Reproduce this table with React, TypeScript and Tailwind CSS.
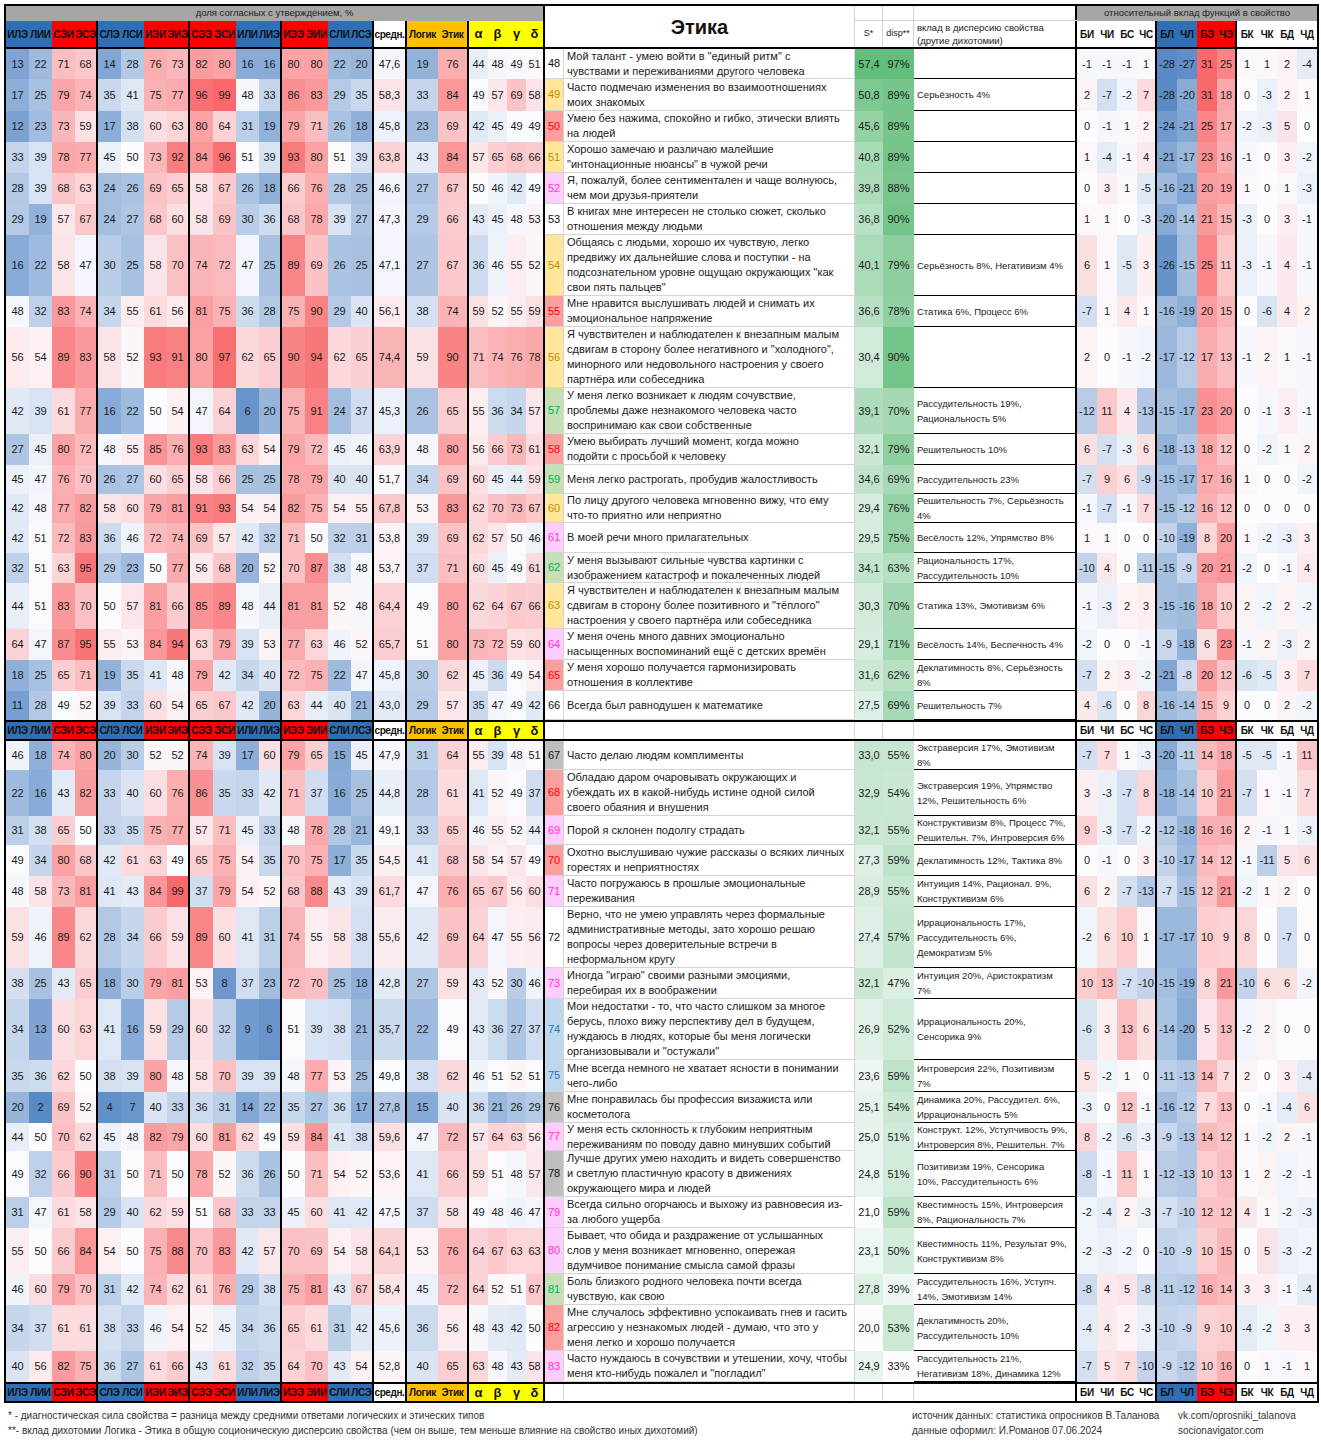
import React from "react";

type Cat = "w" | "y" | "r" | "p" | "g" | "gr" | "b";

interface Item {
  n: number;
  h: string;
  t: number[];
  avg: string;
  le: [number, number];
  q: number[];
  cat: Cat;
  text: string[];
  s: string;
  d: number;
  v: string[];
  f: number[];
}

const TYPES = ["ИЛЭ", "ЛИИ", "СЭИ", "ЭСЭ", "СЛЭ", "ЛСИ", "ИЭИ", "ЭИЭ", "СЭЭ", "ЭСИ", "ИЛИ", "ЛИЭ", "ИЭЭ", "ЭИИ", "СЛИ", "ЛСЭ"];
const TYPE_RED = [false, false, true, true, false, false, true, true, true, true, false, false, true, true, false, false];
const GREEK = ["α", "β", "γ", "δ"];
const FUNCS = ["БИ", "ЧИ", "БС", "ЧС", "БЛ", "ЧЛ", "БЭ", "ЧЭ", "БК", "ЧК", "БД", "ЧД"];

const CAT: Record<Cat, string> = {
  w: "bg-white text-[#111]",
  y: "bg-[#ffe699] text-[#bf8f00]",
  r: "bg-[#fb9e9e] text-[#ff0000]",
  p: "bg-[#ffccff] text-[#ff33cc]",
  g: "bg-[#c6e0b4] text-[#00b050]",
  gr: "bg-[#bfbfbf] text-[#111]",
  b: "bg-[#bdd7ee] text-[#2e75b6]"
};

const ROWS: Item[] = [
  { n: 48, h: "h-[30px]", t: [13, 22, 71, 68, 14, 28, 76, 73, 82, 80, 16, 16, 80, 80, 22, 20], avg: "47,6", le: [19, 76], q: [44, 48, 49, 51], cat: "w",
    text: ["Мой талант - умею войти в \"единый ритм\" с", "чувствами и переживаниями другого человека"], s: "57,4", d: 97, v: [],
    f: [-1, -1, -1, 1, -28, -27, 31, 25, 1, 1, 2, -4] },
  { n: 49, h: "h-[32px]", t: [17, 25, 79, 74, 35, 41, 75, 77, 96, 99, 48, 33, 86, 83, 29, 35], avg: "58,3", le: [33, 84], q: [49, 57, 69, 58], cat: "y",
    text: ["Часто подмечаю изменения во взаимоотношениях", "моих знакомых"], s: "50,8", d: 89, v: ["Серьёзность 4%"],
    f: [2, -7, -2, 7, -28, -20, 31, 18, 0, -3, 2, 1] },
  { n: 50, h: "h-[31px]", t: [12, 23, 73, 59, 17, 38, 60, 63, 80, 64, 31, 19, 79, 71, 26, 18], avg: "45,8", le: [23, 69], q: [42, 45, 49, 49], cat: "r",
    text: ["Умею без нажима, спокойно и гибко, этически влиять", "на людей"], s: "45,6", d: 89, v: [],
    f: [0, -1, 1, 2, -24, -21, 25, 17, -2, -3, 5, 0] },
  { n: 51, h: "h-[31px]", t: [33, 39, 78, 77, 45, 50, 73, 92, 84, 96, 51, 39, 93, 80, 51, 39], avg: "63,8", le: [43, 84], q: [57, 65, 68, 66], cat: "y",
    text: ["Хорошо замечаю и различаю малейшие", "\"интонационные нюансы\" в чужой речи"], s: "40,8", d: 89, v: [],
    f: [1, -4, -1, 4, -21, -17, 23, 16, -1, 0, 3, -2] },
  { n: 52, h: "h-[31px]", t: [28, 39, 68, 63, 24, 26, 69, 65, 58, 67, 26, 18, 66, 76, 28, 25], avg: "46,6", le: [27, 67], q: [50, 46, 42, 49], cat: "p",
    text: ["Я, пожалуй, более сентиментален и чаще волнуюсь,", "чем мои друзья-приятели"], s: "39,8", d: 88, v: [],
    f: [0, 3, 1, -5, -16, -21, 20, 19, 1, 0, 1, -3] },
  { n: 53, h: "h-[31px]", t: [29, 19, 57, 67, 24, 27, 68, 60, 58, 69, 30, 36, 68, 78, 39, 27], avg: "47,3", le: [29, 66], q: [43, 45, 48, 53], cat: "w",
    text: ["В книгах мне интересен не столько сюжет, сколько", "отношения между людьми"], s: "36,8", d: 90, v: [],
    f: [1, 1, 0, -3, -20, -14, 21, 15, -3, 0, 3, -1] },
  { n: 54, h: "h-[61px]", t: [16, 22, 58, 47, 30, 25, 58, 70, 74, 72, 47, 25, 89, 69, 26, 25], avg: "47,1", le: [27, 67], q: [36, 46, 55, 52], cat: "y",
    text: ["Общаясь с людьми, хорошо их чувствую, легко", "предвижу их дальнейшие слова и поступки - на", "подсознательном уровне ощущаю окружающих \"как", "свои пять пальцев\""], s: "40,1", d: 79, v: ["Серьёзность 8%, Негативизм 4%"],
    f: [6, 1, -5, 3, -26, -15, 25, 11, -3, -1, 4, -1] },
  { n: 55, h: "h-[31px]", t: [48, 32, 83, 74, 34, 55, 61, 56, 81, 75, 36, 28, 75, 90, 29, 40], avg: "56,1", le: [38, 74], q: [59, 52, 55, 59], cat: "r",
    text: ["Мне нравится выслушивать людей и снимать их", "эмоциональное напряжение"], s: "36,6", d: 78, v: ["Статика 6%, Процесс 6%"],
    f: [-7, 1, 4, 1, -16, -19, 20, 15, 0, -6, 4, 2] },
  { n: 56, h: "h-[61px]", t: [56, 54, 89, 83, 58, 52, 93, 91, 80, 97, 62, 65, 90, 94, 62, 65], avg: "74,4", le: [59, 90], q: [71, 74, 76, 78], cat: "y",
    text: ["Я чувствителен и наблюдателен к внезапным малым", "сдвигам в сторону более негативного и \"холодного\",", "минорного или недовольного настроения у своего", "партнёра или собеседника"], s: "30,4", d: 90, v: [],
    f: [2, 0, -1, -2, -17, -12, 17, 13, -1, 2, 1, -1] },
  { n: 57, h: "h-[46px]", t: [42, 39, 61, 77, 16, 22, 50, 54, 47, 64, 6, 20, 75, 91, 24, 37], avg: "45,3", le: [26, 65], q: [55, 36, 34, 57], cat: "g",
    text: ["У меня легко возникает к людям сочувствие,", "проблемы даже незнакомого человека часто", "воспринимаю как свои собственные"], s: "39,1", d: 70, v: ["Рассудительность 19%,", "Рациональность 5%"],
    f: [-12, 11, 4, -13, -15, -17, 23, 20, 0, -1, 3, -1] },
  { n: 58, h: "h-[31px]", t: [27, 45, 80, 72, 48, 55, 85, 76, 93, 83, 63, 54, 79, 72, 45, 46], avg: "63,9", le: [48, 80], q: [56, 66, 73, 61], cat: "r",
    text: ["Умею выбирать лучший момент, когда можно", "подойти с просьбой к человеку"], s: "32,1", d: 79, v: ["Решительность 10%"],
    f: [6, -7, -3, 6, -18, -13, 18, 12, 0, -2, 1, 2] },
  { n: 59, h: "h-[29px]", t: [45, 47, 76, 70, 26, 27, 60, 65, 58, 66, 25, 25, 78, 79, 40, 40], avg: "51,7", le: [34, 69], q: [60, 45, 44, 59], cat: "g",
    text: ["Меня легко растрогать, пробудив жалостливость"], s: "34,6", d: 69, v: ["Рассудительность 23%"],
    f: [-7, 9, 6, -9, -15, -17, 17, 16, 1, 0, 0, -2] },
  { n: 60, h: "h-[29px]", t: [42, 48, 77, 82, 58, 60, 79, 81, 91, 93, 54, 54, 82, 75, 54, 55], avg: "67,8", le: [53, 83], q: [62, 70, 73, 67], cat: "y",
    text: ["По лицу другого человека мгновенно вижу, что ему", "что-то приятно или неприятно"], s: "29,4", d: 76, v: ["Решительность 7%, Серьёзность", "4%"],
    f: [-1, -7, -1, 7, -15, -12, 16, 12, 0, 0, 0, 0] },
  { n: 61, h: "h-[30px]", t: [42, 51, 72, 83, 36, 46, 72, 74, 69, 57, 42, 32, 71, 50, 32, 31], avg: "53,8", le: [39, 69], q: [62, 57, 50, 46], cat: "p",
    text: ["В моей речи много прилагательных"], s: "29,5", d: 75, v: ["Весёлость 12%, Упрямство 8%"],
    f: [1, 1, 0, 0, -10, -19, 8, 20, 1, -2, -3, 3] },
  { n: 62, h: "h-[30px]", t: [32, 51, 63, 95, 29, 23, 50, 77, 56, 68, 20, 52, 70, 87, 38, 48], avg: "53,7", le: [37, 71], q: [60, 45, 49, 61], cat: "g",
    text: ["У меня вызывают сильные чувства картинки с", "изображением катастроф и покалеченных людей"], s: "34,1", d: 63, v: ["Рациональность 17%,", "Рассудительность 10%"],
    f: [-10, 4, 0, -11, -15, -9, 20, 21, -2, 0, -1, 4] },
  { n: 63, h: "h-[46px]", t: [44, 51, 83, 70, 50, 57, 81, 66, 85, 89, 48, 44, 81, 81, 52, 48], avg: "64,4", le: [49, 80], q: [62, 64, 67, 66], cat: "y",
    text: ["Я чувствителен и наблюдателен к внезапным малым", "сдвигам в сторону более позитивного и \"тёплого\"", "настроения у своего партнёра или собеседника"], s: "30,3", d: 70, v: ["Статика 13%, Эмотивизм 6%"],
    f: [-1, -3, 2, 3, -15, -16, 18, 10, 2, -2, 2, -2] },
  { n: 64, h: "h-[31px]", t: [64, 47, 87, 95, 55, 53, 84, 94, 63, 79, 39, 53, 77, 63, 46, 52], avg: "65,7", le: [51, 80], q: [73, 72, 59, 60], cat: "p",
    text: ["У меня очень много давних эмоционально", "насыщенных воспоминаний ещё с детских времён"], s: "29,1", d: 71, v: ["Весёлость 14%, Беспечность 4%"],
    f: [-2, 0, 0, -1, -9, -18, 6, 23, -1, 2, -3, 2] },
  { n: 65, h: "h-[31px]", t: [18, 25, 65, 71, 19, 35, 41, 48, 79, 42, 34, 40, 72, 75, 22, 47], avg: "45,8", le: [30, 62], q: [45, 36, 49, 54], cat: "r",
    text: ["У меня хорошо получается гармонизировать", "отношения в коллективе"], s: "31,6", d: 62, v: ["Деклатимность 8%, Серьёзность", "8%"],
    f: [-7, 2, 3, -2, -21, -8, 20, 12, -6, -5, 3, 7] },
  { n: 66, h: "h-[29px]", t: [11, 28, 49, 52, 39, 33, 60, 54, 65, 67, 42, 20, 63, 44, 40, 21], avg: "43,0", le: [29, 57], q: [35, 47, 49, 42], cat: "w",
    text: ["Всегда был равнодушен к математике"], s: "27,5", d: 69, v: ["Решительность 7%"],
    f: [4, -6, 0, 8, -16, -14, 15, 9, 0, 0, 2, -2] }
];

const ROWS2: Item[] = [
  { n: 67, h: "h-[29px]", t: [46, 18, 74, 80, 20, 30, 52, 52, 74, 39, 17, 60, 79, 65, 15, 45], avg: "47,9", le: [31, 64], q: [55, 39, 48, 51], cat: "gr",
    text: ["Часто делаю людям комплименты"], s: "33,0", d: 55, v: ["Экстраверсия 17%, Эмотивизм", "8%"],
    f: [-7, 7, 1, -3, -20, -11, 14, 18, -5, -5, -1, 11] },
  { n: 68, h: "h-[46px]", t: [22, 16, 43, 82, 33, 40, 60, 76, 86, 35, 33, 42, 71, 37, 16, 25], avg: "44,8", le: [28, 61], q: [41, 52, 49, 37], cat: "r",
    text: ["Обладаю даром очаровывать окружающих и", "убеждать их в какой-нибудь истине одной силой", "своего обаяния и внушения"], s: "32,9", d: 54, v: ["Экстраверсия 19%, Упрямство", "12%,  Решительность 6%"],
    f: [3, -3, -7, 8, -18, -14, 10, 21, -7, 1, -1, 7] },
  { n: 69, h: "h-[29px]", t: [31, 38, 65, 50, 33, 35, 75, 77, 57, 71, 45, 33, 48, 78, 28, 21], avg: "49,1", le: [33, 65], q: [46, 55, 52, 44], cat: "p",
    text: ["Порой я склонен подолгу страдать"], s: "32,1", d: 55, v: ["Конструктивизм 8%, Процесс 7%,", "Решительн. 7%, Интроверсия 6%"],
    f: [9, -3, -7, -2, -12, -18, 16, 16, 2, -1, 1, -3] },
  { n: 70, h: "h-[31px]", t: [49, 34, 80, 68, 42, 61, 63, 49, 65, 75, 54, 35, 70, 75, 17, 35], avg: "54,5", le: [41, 68], q: [58, 54, 57, 49], cat: "r",
    text: ["Охотно выслушиваю чужие рассказы о всяких личных", "горестях и неприятностях"], s: "27,3", d: 59, v: ["Деклатимность 12%, Тактика 8%"],
    f: [0, -1, 0, 3, -10, -17, 14, 12, -1, -11, 5, 6] },
  { n: 71, h: "h-[31px]", t: [48, 58, 73, 81, 41, 43, 84, 99, 37, 79, 54, 52, 68, 88, 43, 39], avg: "61,7", le: [47, 76], q: [65, 67, 56, 60], cat: "p",
    text: ["Часто погружаюсь в прошлые эмоциональные", "переживания"], s: "28,9", d: 55, v: ["Интуиция 14%,  Рационал. 9%,", "Конструктивизм 6%"],
    f: [6, 2, -7, -13, -7, -15, 12, 21, -2, 1, 2, 0] },
  { n: 72, h: "h-[61px]", t: [59, 46, 89, 62, 28, 34, 66, 59, 89, 60, 41, 31, 74, 55, 58, 38], avg: "55,6", le: [42, 69], q: [64, 47, 55, 56], cat: "w",
    text: ["Верно, что не умею управлять через формальные", "административные методы, зато хорошо решаю", "вопросы через доверительные встречи в", "неформальном кругу"], s: "27,4", d: 57, v: ["Иррациональность 17%,", "Рассудительность 6%,", "Демократизм 5%"],
    f: [-2, 6, 10, 1, -17, -17, 10, 9, 8, 0, -7, 0] },
  { n: 73, h: "h-[31px]", t: [38, 25, 43, 65, 18, 30, 79, 81, 53, 8, 37, 23, 72, 70, 25, 18], avg: "42,8", le: [27, 59], q: [43, 52, 30, 46], cat: "p",
    text: ["Иногда \"играю\" своими разными эмоциями,", "перебирая их в воображении"], s: "32,1", d: 47, v: ["Интуиция 20%, Аристократизм", "7%"],
    f: [10, 13, -7, -10, -15, -19, 8, 21, -10, 6, 6, -2] },
  { n: 74, h: "h-[61px]", t: [34, 13, 60, 63, 41, 16, 59, 29, 60, 32, 9, 6, 51, 39, 38, 21], avg: "35,7", le: [22, 49], q: [43, 36, 27, 37], cat: "b",
    text: ["Мои недостатки - то, что часто слишком за многое", "берусь, плохо вижу перспективу дел в будущем,", "нуждаюсь в людях, которые бы меня логически", "организовывали и \"остужали\""], s: "26,9", d: 52, v: ["Иррациональность 20%,", "Сенсорика 9%"],
    f: [-6, 3, 13, 6, -14, -20, 5, 13, -2, 2, 0, 0] },
  { n: 75, h: "h-[32px]", t: [35, 36, 62, 50, 38, 39, 80, 48, 58, 70, 39, 39, 48, 77, 53, 25], avg: "49,8", le: [38, 62], q: [46, 51, 52, 51], cat: "b",
    text: ["Мне всегда немного не хватает ясности в понимании", "чего-либо"], s: "23,6", d: 59, v: ["Интроверсия 22%, Позитивизм", "7%"],
    f: [5, -2, 1, 0, -11, -13, 14, 7, 2, 0, 3, -4] },
  { n: 76, h: "h-[31px]", t: [20, 2, 69, 52, 4, 7, 40, 33, 36, 31, 14, 22, 35, 27, 36, 17], avg: "27,8", le: [15, 40], q: [36, 21, 26, 29], cat: "gr",
    text: ["Мне понравилась бы профессия визажиста или", "косметолога"], s: "25,1", d: 54, v: ["Динамика 20%, Рассудител. 6%,", "Иррациональность 5%"],
    f: [-3, 0, 12, -1, -16, -12, 7, 13, 0, -1, -4, 6] },
  { n: 77, h: "h-[28px]", t: [44, 50, 70, 62, 45, 48, 82, 79, 60, 81, 62, 49, 59, 84, 41, 38], avg: "59,6", le: [47, 72], q: [57, 64, 63, 56], cat: "p",
    text: ["У меня есть склонность к глубоким неприятным", "переживаниям по поводу давно минувших событий"], s: "25,0", d: 51, v: ["Конструкт. 12%, Уступчивость 9%,", "Интроверсия 8%, Решительн. 7%"],
    f: [8, -2, -6, -3, -9, -13, 14, 12, 1, -2, 2, -1] },
  { n: 78, h: "h-[46px]", t: [49, 32, 66, 90, 31, 50, 71, 50, 78, 52, 36, 26, 50, 71, 54, 52], avg: "53,6", le: [41, 66], q: [59, 51, 48, 57], cat: "gr",
    text: ["Лучше других умею находить и видеть совершенство", "и светлую пластичную красоту в движениях", "окружающего мира и людей"], s: "24,8", d: 51, v: ["Позитивизм 19%, Сенсорика", "10%, Рассудительность 6%"],
    f: [-8, -1, 11, 1, -12, -13, 10, 13, 1, 2, -2, -1] },
  { n: 79, h: "h-[31px]", t: [31, 47, 61, 58, 29, 40, 62, 59, 51, 68, 33, 33, 45, 60, 41, 42], avg: "47,5", le: [37, 58], q: [49, 48, 46, 47], cat: "p",
    text: ["Всегда сильно огорчаюсь и выхожу из равновесия из-", "за любого ущерба"], s: "21,0", d: 59, v: ["Квестимность 15%, Интроверсия", "8%, Рациональность 7%"],
    f: [-2, -4, 2, -3, -7, -10, 12, 12, 4, 1, -2, -3] },
  { n: 80, h: "h-[46px]", t: [55, 50, 66, 84, 54, 50, 75, 88, 70, 83, 42, 57, 70, 69, 54, 58], avg: "64,1", le: [53, 76], q: [64, 67, 63, 63], cat: "p",
    text: ["Бывает, что обида и раздражение от услышанных", "слов у меня возникает мгновенно, опережая", "вдумчивое понимание смысла самой фразы"], s: "23,1", d: 50, v: ["Квестимность 11%, Результат 9%,", "Конструктивизм 8%"],
    f: [-2, -3, -2, 0, -10, -9, 10, 15, 0, 5, -3, -2] },
  { n: 81, h: "h-[31px]", t: [46, 60, 79, 70, 31, 42, 74, 62, 61, 76, 29, 38, 75, 81, 43, 67], avg: "58,4", le: [45, 72], q: [64, 52, 51, 67], cat: "g",
    text: ["Боль близкого родного человека почти всегда", "чувствую, как свою"], s: "27,8", d: 39, v: ["Рассудительность 16%, Уступч.", "14%, Эмотивизм 14%"],
    f: [-8, 4, 5, -8, -11, -12, 16, 14, 3, 3, -1, -4] },
  { n: 82, h: "h-[46px]", t: [34, 37, 61, 61, 38, 33, 46, 54, 52, 45, 34, 36, 65, 61, 31, 42], avg: "45,6", le: [36, 56], q: [48, 43, 42, 50], cat: "r",
    text: ["Мне случалось эффективно успокаивать гнев и гасить", "агрессию у незнакомых людей - думаю, что это у", "меня легко и хорошо получается"], s: "20,0", d: 53, v: ["Деклатимность 20%,", "Рассудительность 10%"],
    f: [-4, 4, 2, -3, -10, -9, 9, 10, -4, -2, 3, 3] },
  { n: 83, h: "h-[31px]", t: [40, 56, 82, 75, 36, 27, 61, 66, 43, 61, 32, 35, 64, 70, 43, 54], avg: "52,8", le: [40, 65], q: [63, 48, 43, 58], cat: "p",
    text: ["Часто нуждаюсь в сочувствии и утешении, хочу, чтобы", "меня кто-нибудь пожалел и \"погладил\""], s: "24,9", d: 33, v: ["Рассудительность 21%,", "Негативизм 18%, Динамика 12%"],
    f: [-7, 5, 7, -10, -9, -12, 10, 16, 0, 1, -1, 1] }
];

const WHITE = [252, 252, 255];
const RED = [248, 105, 107];
const BLUE = [90, 138, 198];
const GREEN = [99, 190, 123];

function mix(a: number[], b: number[], t: number): string {
  const k = Math.max(0, Math.min(1, t));
  const c = a.map((x, i) => Math.round(x + (b[i] - x) * k));
  return `rgb(${c[0]}, ${c[1]}, ${c[2]})`;
}

function heat(v: number, lo: number, mid: number, hi: number): string {
  if (v >= mid) return mix(WHITE, RED, (v - mid) / (hi - mid));
  return mix(WHITE, BLUE, (mid - v) / (mid - lo));
}

const pct = (v: number) => heat(v, 2, 50, 99);
const fn = (v: number) => heat(v, -28, 0, 31);
const green = (v: number, lo: number, hi: number) => mix(WHITE, GREEN, (v - lo) / (hi - lo));

const cell = "shrink-0 flex items-center justify-center";
const thick = "border-r-2 border-black";
const thin = "border-r border-[#d4d4d4]";

function LeftLabels() {
  return (
    <>
      {TYPES.map((t, i) => (
        <div
          key={t}
          className={`${cell} w-[23px] text-[10px] font-bold tracking-[-0.3px] text-[#111] ${
            TYPE_RED[i] ? "bg-[#ff0000]" : "bg-[#2f6fb6]"
          } ${i % 4 === 3 ? thick : ""}`}
        >
          {t}
        </div>
      ))}
      <div className={`${cell} w-[33px] bg-white text-[10px] font-bold tracking-[-0.4px] text-[#111] ${thick}`}>средн.</div>
      <div className={`${cell} w-[31px] bg-[#ffc000] text-[10px] font-bold tracking-[-0.3px] text-[#111]`}>Логик</div>
      <div className={`${cell} w-[31px] bg-[#ffc000] text-[10px] font-bold tracking-[-0.3px] text-[#111] ${thick}`}>Этик</div>
      {GREEK.map((g, i) => (
        <div key={g} className={`${cell} w-[19px] bg-[#ffff00] text-[13px] font-bold text-[#111] ${i === 3 ? thick : ""}`}>
          {g}
        </div>
      ))}
    </>
  );
}

function RightLabels() {
  return (
    <>
      {FUNCS.map((f, i) => (
        <div
          key={f}
          className={`${cell} w-[20px] text-[10px] font-bold tracking-[-0.3px] text-[#111] ${
            i === 4 || i === 5 ? "bg-[#2f6fb6]" : i === 6 || i === 7 ? "bg-[#ff0000]" : "bg-white"
          } ${i === 3 || i === 7 ? thick : ""}`}
        >
          {f}
        </div>
      ))}
    </>
  );
}

function SectionHeader({ top }: { top: boolean }) {
  return (
    <div className={`flex border-black ${top ? "h-[21px] border-y-2" : "h-[19px] border-t-2"}`}>
      <LeftLabels />
      <div className={`w-[19px] shrink-0 bg-white ${thin}`} />
      <div className={`w-[291px] shrink-0 bg-white ${thin}`} />
      <div className={`w-[28px] shrink-0 bg-white ${thin}`} />
      <div className={`w-[31px] shrink-0 bg-white ${thin}`} />
      <div className={`w-[163px] shrink-0 bg-white ${thick}`} />
      <RightLabels />
    </div>
  );
}

function TopHeader() {
  return (
    <div className="flex h-[43px] border-b-2 border-black">
      <div className="flex w-[539px] shrink-0 flex-col">
        <div className={`${cell} h-[15px] bg-[#a6a6a6] text-[9.5px] text-[#222] ${thick}`}>доля согласных с утверждением, %</div>
        <div className="flex flex-1">
          <LeftLabels />
        </div>
      </div>
      <div className={`${cell} w-[310px] text-[20px] font-bold text-[#111] ${thin}`}>Этика</div>
      <div className="flex w-[222px] shrink-0 flex-col">
        <div className="flex h-[15px] border-b border-[#d4d4d4]">
          <div className={`w-[28px] shrink-0 ${thin}`} />
          <div className={`w-[31px] shrink-0 ${thin}`} />
          <div className={`w-[163px] shrink-0 ${thick}`} />
        </div>
        <div className="flex flex-1">
          <div className={`${cell} w-[28px] text-[9px] text-[#222] ${thin}`}>S*</div>
          <div className={`${cell} w-[31px] text-[9px] text-[#222] ${thin}`}>disp**</div>
          <div className={`w-[163px] shrink-0 overflow-hidden pl-[3px] text-[9.5px] leading-[13px] text-[#222] ${thick}`}>
            вклад в дисперсию свойства
            <br />
            (другие дихотомии)
          </div>
        </div>
      </div>
      <div className="flex w-[240px] shrink-0 flex-col">
        <div className={`${cell} h-[15px] bg-[#a6a6a6] text-[9.5px] text-[#222]`}>относительный вклад функций в свойство</div>
        <div className="flex flex-1">
          <RightLabels />
        </div>
      </div>
    </div>
  );
}

function Row({ r }: { r: Item }) {
  const avg = parseFloat(r.avg.replace(",", "."));
  const s = parseFloat(r.s.replace(",", "."));
  return (
    <div className={`flex ${r.h} text-[11px] text-[#1a1a1a]`}>
      {r.t.map((v, i) => (
        <div key={i} className={`${cell} w-[23px] ${i % 4 === 3 ? thick : ""}`} style={{ background: pct(v) }}>
          {v}
        </div>
      ))}
      <div className={`${cell} w-[33px] ${thick}`} style={{ background: pct(avg) }}>
        {r.avg}
      </div>
      <div className={`${cell} w-[31px]`} style={{ background: pct(r.le[0]) }}>
        {r.le[0]}
      </div>
      <div className={`${cell} w-[31px] ${thick}`} style={{ background: pct(r.le[1]) }}>
        {r.le[1]}
      </div>
      {r.q.map((v, i) => (
        <div key={i} className={`${cell} w-[19px] ${i === 3 ? thick : ""}`} style={{ background: pct(v) }}>
          {v}
        </div>
      ))}
      <div className={`${cell} w-[19px] border-b border-[#d4d4d4] ${thin} ${CAT[r.cat]}`}>{r.n}</div>
      <div className={`flex w-[291px] shrink-0 items-center overflow-hidden whitespace-nowrap border-b border-[#d4d4d4] pl-[3px] leading-[15px] ${thin}`}>
        <div>
          {r.text.map((l, i) => (
            <div key={i}>{l}</div>
          ))}
        </div>
      </div>
      <div className={`${cell} w-[28px]`} style={{ background: green(s, 20, 57.4) }}>
        {r.s}
      </div>
      <div className={`${cell} w-[31px]`} style={{ background: green(r.d, 33, 97) }}>
        {r.d}%
      </div>
      <div className={`flex w-[163px] shrink-0 items-center overflow-hidden whitespace-nowrap border-b border-[#d4d4d4] pl-[3px] text-[9.5px] leading-[15px] ${thick}`}>
        <div>
          {r.v.map((l, i) => (
            <div key={i}>{l}</div>
          ))}
        </div>
      </div>
      {r.f.map((v, i) => (
        <div key={i} className={`${cell} w-[20px] ${i === 3 || i === 7 ? thick : ""}`} style={{ background: fn(v) }}>
          {v}
        </div>
      ))}
    </div>
  );
}

export default function App() {
  return (
    <div className="min-h-screen bg-white pl-[4px] pt-[4px] font-['Liberation_Sans',Arial,sans-serif] text-[#1a1a1a]">
      <div className="w-[1315px] border-2 border-black">
        <TopHeader />
        {ROWS.map((r) => (
          <Row key={r.n} r={r} />
        ))}
        <SectionHeader top />
        {ROWS2.map((r) => (
          <Row key={r.n} r={r} />
        ))}
        <SectionHeader top={false} />
      </div>
      <div className="mt-[5px] flex text-[10px] leading-[15px] text-[#333]">
        <div className="w-[908px] shrink-0 pl-[4px]">
          <div>* - диагностическая сила свойства = разница между средними ответами логических и этических типов</div>
          <div>**- вклад дихотомии Логика - Этика в общую соционическую дисперсию свойства (чем он выше, тем меньше влияние на свойство иных дихотомий)</div>
        </div>
        <div className="w-[266px] shrink-0">
          <div>источник данных: статистика опросников В.Таланова</div>
          <div>данные оформил: И.Романов 07.06.2024</div>
        </div>
        <div>
          <div>vk.com/oprosniki_talanova</div>
          <div>socionavigator.com</div>
        </div>
      </div>
    </div>
  );
}
